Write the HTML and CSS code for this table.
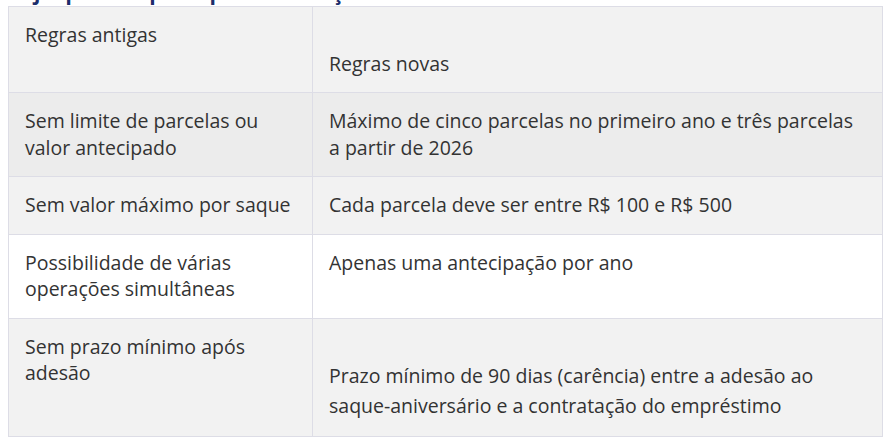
FILE: index.html
```html
<!DOCTYPE html>
<html lang="pt-BR">
<head>
<meta charset="utf-8">
<link rel="stylesheet" href="styles.css">
</head>
<body>
<div class="page">
  <h2 class="heading">Veja quais as principais mudanças</h2>
  <table class="rules">
    <tr class="row-head">
      <td class="old">Regras antigas</td>
      <td class="new new-head">Regras novas</td>
    </tr>
    <tr class="row-dark">
      <td class="old">Sem limite de parcelas ou valor antecipado</td>
      <td class="new">Máximo de cinco parcelas no primeiro ano e três parcelas a partir de 2026</td>
    </tr>
    <tr class="row-light">
      <td class="old">Sem valor máximo por saque</td>
      <td class="new">Cada parcela deve ser entre R$ 100 e R$ 500</td>
    </tr>
    <tr class="row-white">
      <td class="old">Possibilidade de várias operações simultâneas</td>
      <td class="new">Apenas uma antecipação por ano</td>
    </tr>
    <tr class="row-light">
      <td class="old">Sem prazo mínimo após adesão</td>
      <td class="new new-tall">Prazo mínimo de 90 dias (carência) entre a adesão ao saque-aniversário e a contratação do empréstimo</td>
    </tr>
  </table>
</div>
</body>
</html>
```

FILE: styles.css
```css
html, body {
  margin: 0;
  padding: 0;
  background: #ffffff;
}
.page {
  padding: 6px 0 0 8px;
  font-family: "Open Sans", "Noto Sans", sans-serif;
  color: #333333;
  overflow: hidden;
}
.heading {
  margin: -27px 0 0 0;
  height: 27px;
  font-size: 21px;
  line-height: 27px;
  color: #1c2d6b;
  font-weight: 700;
  overflow: hidden;
}
.rules {
  border-collapse: collapse;
  width: 875px;
  font-size: 19.5px;
  line-height: 26.5px;
}
.rules td {
  border: 1px solid #dddde6;
  padding: 15px 16px;
  vertical-align: top;
}
.old {
  width: 271px;
}
.new-head {
  padding-top: 43.5px !important;
}
.new-tall {
  padding-top: 42px !important;
  line-height: 30px;
}
.row-head td { background: #f2f2f2; }
.row-dark td { background: #ececec; }
.row-light td { background: #f2f2f2; }
.row-white td { background: #ffffff; }
```
